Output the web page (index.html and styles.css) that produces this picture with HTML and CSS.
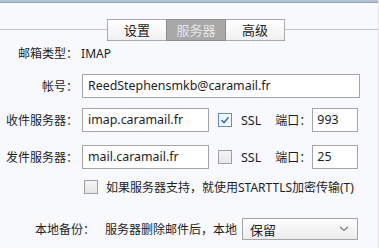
FILE: index.html
```html
<!DOCTYPE html>
<html lang="zh-CN">
  <head>
    <meta charset="UTF-8" />
    <meta name="viewport" content="width=device-width, initial-scale=1.0" />
    <title>帐户设置</title>
    <link rel="stylesheet" href="styles.css">
  </head>
  <body>
    <div class="top-bar"></div>
    <div class="tabs">
      <div class="tab">设置</div>
      <div class="tab active">服务器</div>
      <div class="tab">高级</div>
    </div>
    <div class="form">
      <div class="row type-row">邮箱类型：&nbsp;IMAP</div>
      <div class="row account-row">
        <div class="label">帐号：</div>
        <div class="input wide">ReedStephensmkb@caramail.fr</div>
      </div>
      <div class="row in-row">
        <div class="label">收件服务器：</div>
        <div class="input host">imap.caramail.fr</div>
        <div class="check checked">
          <svg width="10" height="10" viewBox="0 0 10 10">
            <path d="M1.5 5.2 L4 7.6 L8.6 2.2" fill="none" stroke="#3c78b4" stroke-width="1.6" />
          </svg>
        </div>
        <div class="ssl">SSL</div>
        <div class="port-label">端口：</div>
        <div class="input port">993</div>
      </div>
      <div class="row out-row">
        <div class="label">发件服务器：</div>
        <div class="input host">mail.caramail.fr</div>
        <div class="check"></div>
        <div class="ssl">SSL</div>
        <div class="port-label">端口：</div>
        <div class="input port">25</div>
      </div>
      <div class="row tls-row">
        <div class="check"></div>
        <div class="tls-text">如果服务器支持，就使用STARTTLS加密传输(T)</div>
      </div>
      <div class="row backup-row">
        <div class="backup-label">本地备份：</div>
        <div class="backup-text">服务器删除邮件后，本地</div>
        <div class="select">
          <span>保留</span>
          <svg width="10" height="6" viewBox="0 0 10 6">
            <path d="M1 1 L5 4.5 L9 1" fill="none" stroke="#808080" stroke-width="1.3" />
          </svg>
        </div>
      </div>
    </div>
  </body>
</html>
```

FILE: styles.css
```css
body {
  margin: 0;
  width: 379px;
  height: 248px;
  overflow: hidden;
  background-color: #f7f9fd;
  font-family: "Noto Sans", "Noto Sans CJK SC", sans-serif;
  font-size: 12px;
  color: #1e1e1e;
  box-sizing: border-box;
  border-right: 1px solid #e6e9ee;
}

.top-bar {
  height: 2px;
  background-color: #b4c2d4;
  border-bottom: 1px solid #97a6ba;
}

.tabs {
  display: flex;
  padding: 16px 0 0 107px;
  background: linear-gradient(#c4c4c4, #c4c4c4) 0 26px / 100% 1px no-repeat;
}

.tab {
  width: 58px;
  height: 20px;
  line-height: 20px;
  text-align: center;
  font-size: 13px;
  border: 1px solid #a9a9a9;
  margin-right: -1px;
  background: linear-gradient(#ffffff, #f0f0f0);
  color: #222;
}

.tab.active {
  background: #a8a8a8;
  border-color: #8c8c8c;
  color: #e4e4e4;
  position: relative;
  z-index: 1;
}

.row {
  display: flex;
  align-items: center;
}

.type-row {
  height: 18px;
  margin-top: 3px;
  padding-left: 18px;
}

.account-row {
  margin-top: 12px;
}

.in-row {
  margin-top: 10px;
}

.out-row {
  margin-top: 13px;
}

.tls-row {
  margin-top: 9px;
  padding-left: 84px;
}

.backup-row {
  margin-top: 22px;
  padding-left: 35px;
}

.label {
  width: 78px;
  text-align: right;
  margin-right: 4px;
}

.input {
  height: 22px;
  line-height: 22px;
  border: 1px solid #a5a5a5;
  background-color: #fff;
  padding: 0 5px;
  font-size: 12.4px;
  box-sizing: content-box;
}

.wide {
  width: 266px;
}

.host {
  width: 115px;
}

.port {
  width: 36px;
  padding: 0 4px;
}

.check {
  width: 12px;
  height: 12px;
  border: 1px solid #a0a0a0;
  background: linear-gradient(#f4f4f4, #e6e6e6);
  display: flex;
  align-items: center;
  justify-content: center;
}

.check.checked {
  border-color: #5b8fc6;
  background: #f4f8fc;
}

.in-row .check,
.out-row .check {
  margin-left: 9px;
}

.ssl {
  margin-left: 9px;
  font-size: 12.5px;
}

.port-label {
  margin-left: 14px;
  margin-right: 1px;
}

.tls-text {
  margin-left: 8px;
}

.backup-label {
  width: 70px;
}

.select {
  width: 116px;
  height: 22px;
  margin-left: 5px;
  border: 1px solid #a5a5a5;
  background: linear-gradient(#fdfdfd, #ececec);
  display: flex;
  align-items: center;
  justify-content: space-between;
  padding: 0 8px 0 7px;
  box-sizing: border-box;
  font-size: 13px;
}
```
